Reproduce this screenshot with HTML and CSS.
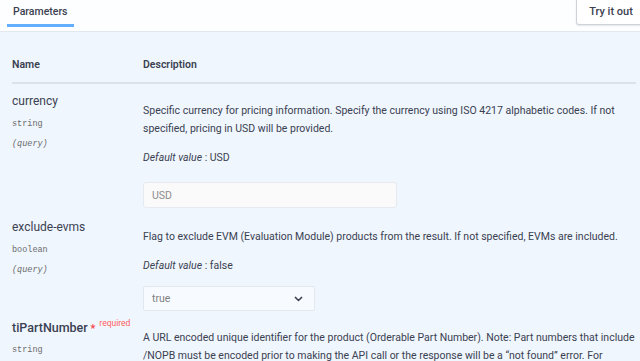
FILE: index.html
```html
<!DOCTYPE html>
<html lang="en">
<head>
    <meta charset="UTF-8">
    <title>Parameters</title>
    <link rel="stylesheet" href="styles.css">
</head>
<body>
    <div class="section-header">
        <div class="tab-header">
            <h4 class="tab-item">Parameters</h4>
        </div>
        <button class="try-out-btn">Try it out</button>
    </div>

    <div class="parameters-container">
        <table class="parameters">
            <thead>
                <tr>
                    <th class="col-name">Name</th>
                    <th class="col-desc">Description</th>
                </tr>
            </thead>
            <tbody>
                <tr>
                    <td class="param-col-name">
                        <div class="param-name">currency</div>
                        <div class="param-type">string</div>
                        <div class="param-in">(query)</div>
                    </td>
                    <td class="param-col-desc">
                        <p class="markdown">Specific currency for pricing information. Specify the currency using ISO 4217 alphabetic codes. If not specified, pricing in USD will be provided.</p>
                        <p class="default-value"><i>Default value</i> : USD</p>
                        <input class="param-input" type="text" placeholder="USD">
                    </td>
                </tr>
                <tr>
                    <td class="param-col-name">
                        <div class="param-name">exclude-evms</div>
                        <div class="param-type">boolean</div>
                        <div class="param-in">(query)</div>
                    </td>
                    <td class="param-col-desc">
                        <p class="markdown">Flag to exclude EVM (Evaluation Module) products from the result. If not specified, EVMs are included.</p>
                        <p class="default-value"><i>Default value</i> : false</p>
                        <div class="param-select">
                            <span>true</span>
                            <svg class="chevron" viewBox="0 0 10 6" fill="none" stroke="currentColor" stroke-width="1.6" stroke-linecap="round" stroke-linejoin="round">
                                <path d="M1.5 1.2 5 4.6 8.5 1.2"></path>
                            </svg>
                        </div>
                    </td>
                </tr>
                <tr class="row-required">
                    <td class="param-col-name">
                        <div class="param-name required">tiPartNumber<span class="star">&nbsp;*</span><span class="req-label">required</span></div>
                        <div class="param-type">string</div>
                    </td>
                    <td class="param-col-desc">
                        <p class="markdown">A URL encoded unique identifier for the product (Orderable Part Number). Note: Part numbers that include /NOPB must be encoded prior to making the API call or the response will be a “not found” error. For example, OPA2333/NOPB</p>
                    </td>
                </tr>
            </tbody>
        </table>
    </div>
</body>
</html>
```

FILE: styles.css
```css
* {
    box-sizing: border-box;
}

body {
    margin: 0;
    font-family: Roboto, 'Liberation Sans', sans-serif;
    color: #3b4151;
    background: #eff6fe;
    overflow: hidden;
}

.section-header {
    display: flex;
    justify-content: space-between;
    align-items: flex-start;
    height: 32px;
    padding: 0 0 0 7px;
    background: #fdfeff;
    border-bottom: 1px solid #e3e8ee;
}

.tab-header {
    display: flex;
}

.tab-item {
    margin: 0;
    padding: 4px 6px 0;
    height: 27px;
    font-size: 10.5px;
    font-weight: 500;
    line-height: 16px;
    color: #3b4151;
    border-bottom: 3px solid #61affe;
}

.try-out-btn {
    margin-right: -6px;
    width: 70px;
    height: 25px;
    padding: 0 0 2px;
    font-family: inherit;
    font-size: 11px;
    font-weight: 500;
    color: #3b4151;
    background: #fff;
    border: 1px solid #cfd3d8;
    border-top: none;
    border-radius: 0 0 0 3px;
    box-shadow: 0 1px 2px rgba(0, 0, 0, 0.1);
}

.parameters-container {
    padding: 0 4px 0 12px;
}

.parameters {
    width: 100%;
    border-collapse: collapse;
}

.parameters th {
    padding: 26px 0 11px;
    text-align: left;
    font-size: 10.5px;
    font-weight: 600;
    color: #3b4151;
    border-bottom: 2px solid #dde2e8;
}

.col-name {
    width: 131px;
}

.parameters td {
    vertical-align: top;
    padding: 0;
}

.param-col-name {
    padding-top: 9px !important;
}

.row-required .param-col-name {
    padding-top: 9px !important;
}

.param-name {
    font-size: 12px;
    line-height: 16px;
    color: #3b4151;
}

.param-name.required {
    font-size: 12.5px;
    font-weight: 500;
}

.star {
    color: #f93e3e;
    font-size: 11px;
}

.req-label {
    position: relative;
    top: -6px;
    padding-left: 4px;
    font-size: 8.5px;
    color: #ff6060;
    font-weight: 400;
}

.param-type {
    margin-top: 9px;
    font-family: 'Liberation Mono', monospace;
    font-size: 8.5px;
    line-height: 12px;
    color: #6b6b6b;
}

.row-required .param-type {
    margin-top: 7px;
}

.param-in {
    margin-top: 8px;
    font-family: 'Liberation Mono', monospace;
    font-size: 8.5px;
    font-style: italic;
    line-height: 12px;
    color: #6b6b6b;
}

.param-col-desc {
    padding-top: 18px !important;
}

.markdown {
    margin: 0;
    font-size: 10.5px;
    line-height: 18px;
    color: #3b4151;
}

.default-value {
    margin: 11px 0 0;
    font-size: 10.5px;
    line-height: 18px;
    color: #3b4151;
}

.param-input {
    display: block;
    margin: 15px 0 2px;
    width: 254px;
    height: 26px;
    padding: 0 8px;
    font-family: inherit;
    font-size: 10.5px;
    color: #3b4151;
    background: #fafafa;
    border: 1px solid #e6e9ee;
    border-radius: 3px;
    outline: none;
}

.param-input::placeholder {
    color: #8c8c8c;
}

.param-select {
    display: flex;
    align-items: center;
    justify-content: space-between;
    margin-top: 11px;
    width: 172px;
    height: 25px;
    padding: 0 11px 0 8px;
    font-size: 10.5px;
    color: #808080;
    background: #f7fbff;
    border: 1px solid #e3e8ee;
    border-radius: 2px;
}

.chevron {
    width: 9px;
    height: 6px;
    color: #3b4151;
}
```
